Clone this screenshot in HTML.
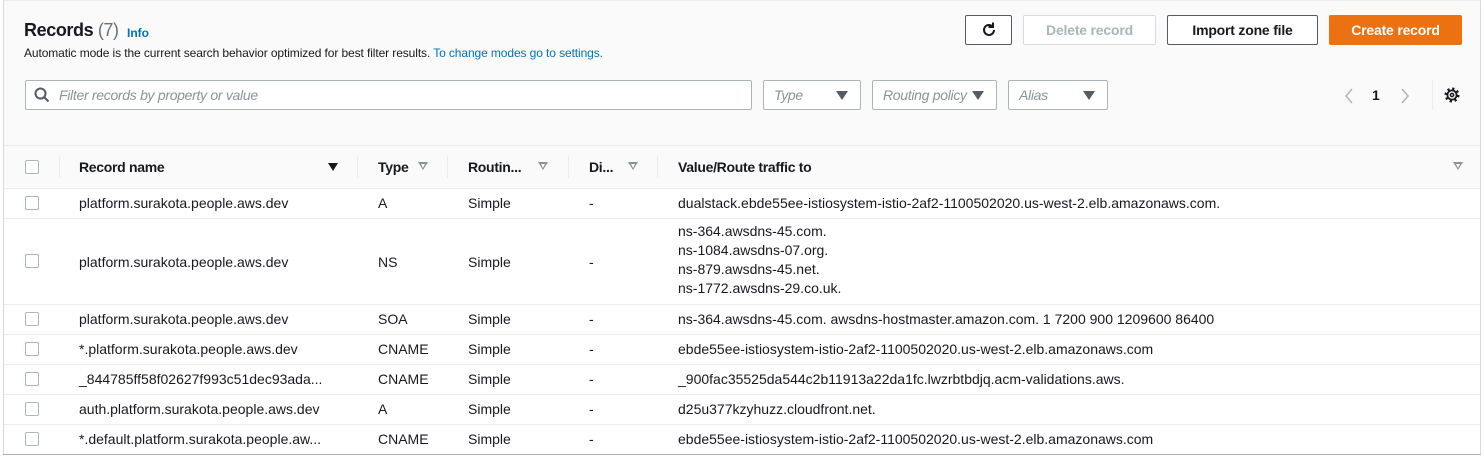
<!DOCTYPE html>
<html><head><meta charset="utf-8"><style>
*{box-sizing:border-box;margin:0;padding:0}
body{width:1484px;height:457px;background:#fff;font-family:"Liberation Sans",sans-serif;color:#16191f;position:relative;overflow:hidden;font-size:14px}
.box{position:absolute;left:3px;top:0;width:1478px;height:455px;border:1px solid #d5dbdb;border-top:1px solid #eaeded;background:#fafafa}
.a{position:absolute;white-space:nowrap}
.btn{position:absolute;top:15px;height:30px;border:1px solid #545b64;border-radius:2px;background:#fff;font-weight:bold;font-size:14px;color:#545b64;display:flex;align-items:center;justify-content:center;letter-spacing:-0.2px}
.sel{position:absolute;top:80px;height:30px;border:1px solid #aab7b8;border-radius:2px;background:#fff;font-style:italic;color:#879596;font-size:14px;padding-left:10px;line-height:28px;letter-spacing:-0.3px}
.sel:after{content:"";position:absolute;right:12px;top:10px;border-left:6px solid transparent;border-right:6px solid transparent;border-top:9px solid #545b64}
.row{position:absolute;left:4px;width:1476px;background:#fff;border-top:1px solid #eaeded}
.cb{position:absolute;left:21px;width:14px;height:14px;border:1px solid #aab7b8;border-radius:2px;background:#fff}
.t{position:absolute;font-size:14px;white-space:nowrap}
.th{position:absolute;top:159px;font-weight:bold;font-size:14px;letter-spacing:-0.3px}
.sep{position:absolute;top:156px;width:1px;height:22px;background:#eaeded}
.tri{position:absolute;top:162px;width:0;height:0;border-left:5px solid transparent;border-right:5px solid transparent;border-top:8px solid #879596}
.tri:after{content:"";position:absolute;left:-2.5px;top:-6.5px;border-left:2.5px solid transparent;border-right:2.5px solid transparent;border-top:4px solid #fff}
</style></head><body>
<div class="box"></div>
<div class="a" style="left:24px;top:20px;font-size:18px;font-weight:bold;letter-spacing:-0.4px">Records <span style="font-weight:normal;color:#687078">(7)</span></div>
<div class="a" style="left:127px;top:26px;font-size:12px;font-weight:bold;color:#0073bb">Info</div>
<div class="a" style="left:24px;top:46px;font-size:12px;color:#16191f;letter-spacing:-0.1px">Automatic mode is the current search behavior optimized for best filter results. <span style="color:#0073bb">To change modes go to settings.</span></div>
<div class="btn" style="left:965px;width:47px"><svg width="18" height="18" viewBox="0 0 18 18"><path d="M14 9a5 5 0 1 1-1.6-3.7" fill="none" stroke="#16191f" stroke-width="2"/><path d="M13 1.5v4.5h-4.5" fill="none" stroke="#16191f" stroke-width="2"/></svg></div>
<div class="btn" style="left:1023px;width:133px;border-color:#d5dbdb;color:#aab7b8">Delete record</div>
<div class="btn" style="left:1167px;width:151px;color:#16191f">Import zone file</div>
<div class="btn" style="left:1329px;width:133px;background:#ec7211;border-color:#ec7211;color:#fff">Create record</div>
<div class="a" style="left:25px;top:80px;width:727px;height:30px;border:1px solid #aab7b8;border-radius:2px;background:#fff"></div>
<svg class="a" style="left:34px;top:87px" width="16" height="16" viewBox="0 0 16 16"><circle cx="6.5" cy="6.5" r="5" fill="none" stroke="#545b64" stroke-width="2"/><path d="M10 10l4.5 4.5" stroke="#545b64" stroke-width="2"/></svg>
<div class="a" style="left:59px;top:87px;font-style:italic;color:#879596;font-size:14px;letter-spacing:-0.3px">Filter records by property or value</div>
<div class="sel" style="left:763px;width:98px">Type</div>
<div class="sel" style="left:872px;width:125px">Routing policy</div>
<div class="sel" style="left:1008px;width:100px">Alias</div>
<svg class="a" style="left:1340px;top:86px" width="80" height="20"><path d="M12 3l-6 7 6 7" fill="none" stroke="#aab7b8" stroke-width="1.5"/><path d="M62 3l6 7-6 7" fill="none" stroke="#aab7b8" stroke-width="1.5"/></svg>
<div class="a" style="left:1372px;top:87px;font-weight:bold">1</div>
<div class="a" style="left:1432px;top:80px;width:1px;height:30px;background:#eaeded"></div>
<svg class="a" style="left:1443px;top:86px" width="18" height="18" viewBox="0 0 18 18"><circle cx="9" cy="9" r="6.2" fill="none" stroke="#16191f" stroke-width="2.6" stroke-dasharray="2.2 2.67"/><circle cx="9" cy="9" r="4.6" fill="none" stroke="#16191f" stroke-width="1.8"/><circle cx="9" cy="9" r="1.6" fill="none" stroke="#16191f" stroke-width="1.5"/></svg>
<div class="a" style="left:4px;top:145px;width:1476px;height:1px;background:#eaeded"></div>
<div class="cb" style="left:25px;top:160px"></div>
<div class="sep" style="left:59px"></div>
<div class="th" style="left:79px">Record name</div>
<div style="position:absolute;left:328px;top:163px;border-left:5px solid transparent;border-right:5px solid transparent;border-top:8px solid #16191f"></div>
<div class="sep" style="left:357px"></div>
<div class="th" style="left:378px">Type</div><div class="tri" style="left:418px"></div>
<div class="sep" style="left:447px"></div>
<div class="th" style="left:468px">Routin...</div><div class="tri" style="left:538px"></div>
<div class="sep" style="left:568px"></div>
<div class="th" style="left:589px">Di...</div><div class="tri" style="left:628px"></div>
<div class="sep" style="left:657px"></div>
<div class="th" style="left:678px">Value/Route traffic to</div><div class="tri" style="left:1453px"></div>

<div class="row" style="top:188px;height:30px"></div>
<div class="row" style="top:218px;height:86px"></div>
<div class="row" style="top:304px;height:30px"></div>
<div class="row" style="top:334px;height:30px"></div>
<div class="row" style="top:364px;height:30px"></div>
<div class="row" style="top:394px;height:30px"></div>
<div class="row" style="top:424px;height:30px"></div>

<div class="cb" style="left:25px;top:196px"></div><div class="t" style="left:79px;top:195px">platform.surakota.people.aws.dev</div><div class="t" style="left:378px;top:195px">A</div><div class="t" style="left:468px;top:195px">Simple</div><div class="t" style="left:589px;top:195px">-</div><div class="t" style="left:678px;top:195px">dualstack.ebde55ee-istiosystem-istio-2af2-1100502020.us-west-2.elb.amazonaws.com.</div>

<div class="cb" style="left:25px;top:254px"></div><div class="t" style="left:79px;top:254px">platform.surakota.people.aws.dev</div><div class="t" style="left:378px;top:254px">NS</div><div class="t" style="left:468px;top:254px">Simple</div><div class="t" style="left:589px;top:254px">-</div>
<div class="t" style="left:678px;top:222px;line-height:19px">ns-364.awsdns-45.com.<br>ns-1084.awsdns-07.org.<br>ns-879.awsdns-45.net.<br>ns-1772.awsdns-29.co.uk.</div>

<div class="cb" style="left:25px;top:312px"></div><div class="t" style="left:79px;top:311px">platform.surakota.people.aws.dev</div><div class="t" style="left:378px;top:311px">SOA</div><div class="t" style="left:468px;top:311px">Simple</div><div class="t" style="left:589px;top:311px">-</div><div class="t" style="left:678px;top:311px">ns-364.awsdns-45.com. awsdns-hostmaster.amazon.com. 1 7200 900 1209600 86400</div>

<div class="cb" style="left:25px;top:342px"></div><div class="t" style="left:79px;top:341px">*.platform.surakota.people.aws.dev</div><div class="t" style="left:378px;top:341px">CNAME</div><div class="t" style="left:468px;top:341px">Simple</div><div class="t" style="left:589px;top:341px">-</div><div class="t" style="left:678px;top:341px">ebde55ee-istiosystem-istio-2af2-1100502020.us-west-2.elb.amazonaws.com</div>

<div class="cb" style="left:25px;top:372px"></div><div class="t" style="left:79px;top:371px">_844785ff58f02627f993c51dec93ada...</div><div class="t" style="left:378px;top:371px">CNAME</div><div class="t" style="left:468px;top:371px">Simple</div><div class="t" style="left:589px;top:371px">-</div><div class="t" style="left:678px;top:371px">_900fac35525da544c2b11913a22da1fc.lwzrbtbdjq.acm-validations.aws.</div>

<div class="cb" style="left:25px;top:402px"></div><div class="t" style="left:79px;top:401px">auth.platform.surakota.people.aws.dev</div><div class="t" style="left:378px;top:401px">A</div><div class="t" style="left:468px;top:401px">Simple</div><div class="t" style="left:589px;top:401px">-</div><div class="t" style="left:678px;top:401px">d25u377kzyhuzz.cloudfront.net.</div>

<div class="cb" style="left:25px;top:432px"></div><div class="t" style="left:79px;top:431px">*.default.platform.surakota.people.aw...</div><div class="t" style="left:378px;top:431px">CNAME</div><div class="t" style="left:468px;top:431px">Simple</div><div class="t" style="left:589px;top:431px">-</div><div class="t" style="left:678px;top:431px">ebde55ee-istiosystem-istio-2af2-1100502020.us-west-2.elb.amazonaws.com</div>
<div class="a" style="left:3px;top:454px;width:1478px;height:1px;background:#aab7b8"></div>
</body></html>
